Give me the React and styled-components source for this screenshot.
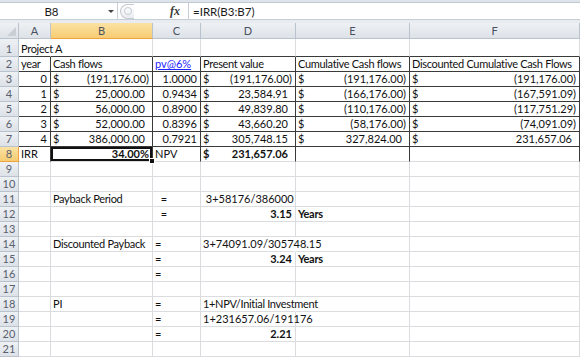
import React from "react";
import styled, { createGlobalStyle, css } from "styled-components";

const GlobalStyle = createGlobalStyle`
  html, body {
    margin: 0;
    padding: 0;
    background: #ffffff;
    overflow: hidden;
  }
  body {
    font-family: Lato, "Liberation Sans", sans-serif;
  }
`;

const Window = styled.div`
  width: 580px;
  height: 358px;
  display: flex;
  flex-direction: column;
  background: #ffffff;
  overflow: hidden;

  & > * {
    flex-shrink: 0;
  }
`;

const TopStrip = styled.div`
  height: 3px;
  background: #dfe4ea;
  border-bottom: 1px solid #c2c9d2;
  box-sizing: border-box;
`;

const FormulaBar = styled.div`
  height: 17px;
  display: flex;
  align-items: stretch;
  background: #ffffff;
  border-bottom: 1px solid #c8ced6;
  box-sizing: border-box;
`;

const NameBox = styled.div`
  width: 118px;
  position: relative;
  display: flex;
  align-items: center;
  justify-content: center;
  font-size: 11.5px;
  color: #1a1a1a;
  border-right: 1px solid #c8ced6;
  box-sizing: border-box;
  padding-right: 14px;
`;

const Caret = styled.span`
  position: absolute;
  right: 3px;
  top: 7px;
  width: 0;
  height: 0;
  border-left: 3px solid transparent;
  border-right: 3px solid transparent;
  border-top: 3px solid #444;
`;

const Middle = styled.div`
  width: 70px;
  display: flex;
  align-items: center;
  justify-content: space-between;
  padding: 0 8px 0 2px;
  box-sizing: border-box;
  background: #ffffff;
`;

const Grip = styled.div`
  width: 14px;
  height: 15px;
  border: 1px solid #c3c9d1;
  border-radius: 8px 0 0 8px;
  border-right: none;
  box-sizing: border-box;
  background: linear-gradient(#ffffff, #e9ecf0);
  display: flex;
  align-items: center;
  justify-content: center;

  &::after {
    content: "";
    width: 6px;
    height: 6px;
    border-radius: 50%;
    border: 1px solid #c7ccd3;
  }
`;

const Fx = styled.span`
  font-family: "Liberation Serif", serif;
  font-style: italic;
  font-weight: bold;
  font-size: 12px;
  color: #3a3a3a;
`;

const FormulaInput = styled.div`
  flex: 1;
  display: flex;
  align-items: center;
  padding-left: 4px;
  font-size: 11.5px;
  color: #1a1a1a;
  border-left: 1px solid #c8ced6;
`;

const Gap = styled.div`
  height: 3px;
  background: #e8ecf0;
`;

const Sheet = styled.div`
  display: grid;
  grid-template-columns: 19px 32px 102px 48px 95px 114px minmax(0, 1fr);
  grid-template-rows: 16px 18px repeat(20, 15px);
  font-size: 11px;
  line-height: 13px;
  color: #111;
`;

const headBase = css`
  box-sizing: border-box;
  display: flex;
  align-items: center;
  justify-content: center;
  color: #4a5160;
  font-size: 11px;
  border-right: 1px solid #b9c2cd;
  border-bottom: 1px solid #b9c2cd;
  background: ${(p) =>
    p.$active
      ? "linear-gradient(#fbe2a4, #f6cc72)"
      : "linear-gradient(#eef1f4, #dde2e8)"};
  ${(p) => p.$active && "border-bottom-color: #f0a23e;"}
`;

const Corner = styled.div`
  ${headBase};
  position: relative;

  &::after {
    content: "";
    position: absolute;
    right: 2px;
    bottom: 2px;
    width: 0;
    height: 0;
    border-left: 9px solid transparent;
    border-bottom: 9px solid #c9ced5;
  }
`;

const ColHead = styled.div`
  ${headBase};
`;

const RowHead = styled.div`
  ${headBase};
  align-items: flex-end;
  padding-bottom: 1px;
  color: #59606e;
  ${(p) => p.$active && "border-right-color: #f0a23e;"}
`;

const Cell = styled.div`
  box-sizing: border-box;
  position: relative;
  min-width: 0;
  display: flex;
  align-items: flex-end;
  justify-content: ${(p) => (p.$align === "right" ? "flex-end" : "flex-start")};
  padding: 0 3px 1px 2px;
  white-space: pre;
  letter-spacing: ${(p) => (p.$tight ? "-0.32px" : "0")};
  font-weight: ${(p) => (p.$bold ? "bold" : "normal")};
  border-right: 1px solid
    ${(p) => (p.$r ? "#3a3a3a" : p.$spill ? "#ffffff" : "#dadcdf")};
  border-bottom: 1px solid ${(p) => (p.$b ? "#3a3a3a" : "#dadcdf")};
  z-index: ${(p) => (p.$spill || p.$sel ? 2 : 1)};
  ${(p) =>
    p.$sel &&
    css`
      box-shadow: inset 0 0 0 2px #111;
      &::after {
        content: "";
        position: absolute;
        right: -3px;
        bottom: -3px;
        width: 4px;
        height: 4px;
        background: #111;
        border: 1px solid #fff;
      }
    `}
`;

const Link = styled.span`
  color: #2323ff;
  text-decoration: underline;
`;

const Dollar = styled.span`
  flex: 0 0 auto;
`;

const Amount = styled.span`
  margin-left: auto;
  padding-right: ${(p) => (p.$neg ? "0" : "4px")};
`;

const cols = ["A", "B", "C", "D", "E", "F"];

const acct = (v, bold) => ({ acct: v, bold });
const num = (v, bold) => ({ t: v, align: "right", bold });

const flows = [
  ["0", "(191,176.00)", "1.0000", "(191,176.00)", "(191,176.00)", "(191,176.00)"],
  ["1", "25,000.00", "0.9434", "23,584.91", "(166,176.00)", "(167,591.09)"],
  ["2", "56,000.00", "0.8900", "49,839.80", "(110,176.00)", "(117,751.29)"],
  ["3", "52,000.00", "0.8396", "43,660.20", "(58,176.00)", "(74,091.09)"],
  ["4", "386,000.00", "0.7921", "305,748.15", "327,824.00", "231,657.06"],
];

const rows = [
  [{ t: "Project A", spill: true }],
  [
    { t: "year" },
    { t: "Cash flows" },
    { link: "pv@6%" },
    { t: "Present value" },
    { t: "Cumulative Cash flows" },
    { t: "Discounted Cumulative Cash Flows" },
  ],
  ...flows.map((f) => [
    num(f[0]),
    acct(f[1]),
    num(f[2]),
    acct(f[3]),
    acct(f[4]),
    acct(f[5]),
  ]),
  [{ t: "IRR" }, { ...num("34.00%", true), sel: true }, { t: "NPV" }, acct("231,657.06", true)],
  [],
  [],
  [{}, { t: "Payback Period" }, { t: "  =" }, { t: " 3+58176/386000" }],
  [{}, {}, { t: "  =" }, num("3.15", true), { t: "Years", bold: true }],
  [],
  [{}, { t: "Discounted Payback" }, { t: "=" }, { t: "3+74091.09/305748.15", spill: true }],
  [{}, {}, { t: "=" }, num("3.24", true), { t: "Years", bold: true }],
  [{}, {}, { t: "=" }],
  [],
  [{}, { t: "PI" }, { t: "=" }, { t: "1+NPV/Initial Investment", spill: true }],
  [{}, {}, { t: "=" }, { t: "1+231657.06/191176" }],
  [{}, {}, { t: "=" }, num("2.21", true)],
  [],
];

const edges = (r) => {
  if (r === 1) return { b: true };
  if (r >= 2 && r <= 7) return { r: true, b: true };
  if (r === 8) return { r: true };
  return {};
};

const renderCell = (spec, r, c) => {
  const e = edges(r);
  const key = `${cols[c]}${r}`;
  if (spec.acct) {
    const neg = spec.acct.startsWith("(");
    return (
      <Cell key={key} $r={e.r} $b={e.b} $bold={spec.bold}>
        <Dollar>$</Dollar>
        <Amount $neg={neg}>{spec.acct}</Amount>
      </Cell>
    );
  }
  const tight = spec.t ? /[a-z]{3}/.test(spec.t) : false;
  return (
    <Cell
      key={key}
      $r={e.r}
      $b={e.b}
      $align={spec.align}
      $bold={spec.bold}
      $spill={spec.spill}
      $sel={spec.sel}
      $tight={tight}
    >
      {spec.link ? <Link>{spec.link}</Link> : spec.t}
    </Cell>
  );
};

export default function App() {
  return (
    <Window>
      <GlobalStyle />
      <TopStrip />
      <FormulaBar>
        <NameBox>
          B8
          <Caret />
        </NameBox>
        <Middle>
          <Grip />
          <Fx>fx</Fx>
        </Middle>
        <FormulaInput>=IRR(B3:B7)</FormulaInput>
      </FormulaBar>
      <Gap />
      <Sheet>
        <Corner />
        {cols.map((c) => (
          <ColHead key={c} $active={c === "B"}>
            {c}
          </ColHead>
        ))}
        {rows.map((row, i) => {
          const r = i + 1;
          return (
            <React.Fragment key={r}>
              <RowHead $active={r === 8}>{r}</RowHead>
              {cols.map((_, c) => renderCell(row[c] || {}, r, c))}
            </React.Fragment>
          );
        })}
      </Sheet>
    </Window>
  );
}
